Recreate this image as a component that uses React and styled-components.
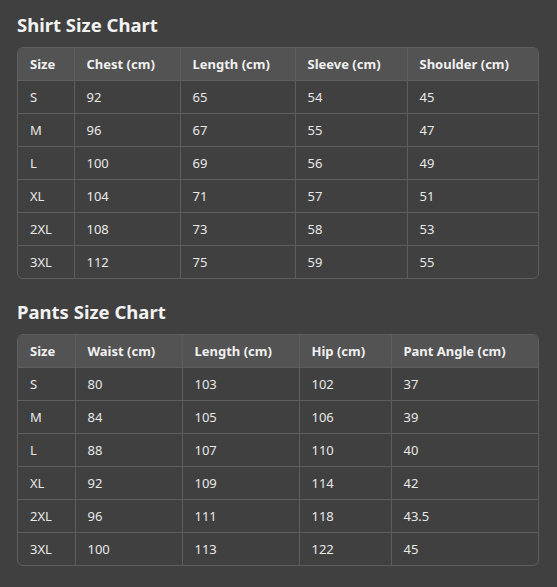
import React from 'react';
import styled, { createGlobalStyle } from 'styled-components';

const shirt = {
  cols: [
    { label: 'Size', width: 56 },
    { label: 'Chest (cm)', width: 106 },
    { label: 'Length (cm)', width: 115 },
    { label: 'Sleeve (cm)', width: 112 },
    { label: 'Shoulder (cm)', width: 131 },
  ],
  rows: [
    ['S', '92', '65', '54', '45'],
    ['M', '96', '67', '55', '47'],
    ['L', '100', '69', '56', '49'],
    ['XL', '104', '71', '57', '51'],
    ['2XL', '108', '73', '58', '53'],
    ['3XL', '112', '75', '59', '55'],
  ],
};

const pants = {
  cols: [
    { label: 'Size', width: 57 },
    { label: 'Waist (cm)', width: 107 },
    { label: 'Length (cm)', width: 117 },
    { label: 'Hip (cm)', width: 92 },
    { label: 'Pant Angle (cm)', width: 147 },
  ],
  rows: [
    ['S', '80', '103', '102', '37'],
    ['M', '84', '105', '106', '39'],
    ['L', '88', '107', '110', '40'],
    ['XL', '92', '109', '114', '42'],
    ['2XL', '96', '111', '118', '43.5'],
    ['3XL', '100', '113', '122', '45'],
  ],
};

const SizeChart = ({ title, data }) => (
  <Section>
    <Title>{title}</Title>
    <TableWrap>
      <Table>
        <colgroup>
          {data.cols.map((c) => (
            <col key={c.label} style={{ width: c.width }} />
          ))}
        </colgroup>
        <thead>
          <tr>
            {data.cols.map((c) => (
              <Th key={c.label}>{c.label}</Th>
            ))}
          </tr>
        </thead>
        <tbody>
          {data.rows.map((r) => (
            <tr key={r[0]}>
              {r.map((v, i) => (
                <Td key={i}>{v}</Td>
              ))}
            </tr>
          ))}
        </tbody>
      </Table>
    </TableWrap>
  </Section>
);

const App = () => (
  <>
    <GlobalStyle />
    <Page>
      <SizeChart title="Shirt Size Chart" data={shirt} />
      <SizeChart title="Pants Size Chart" data={pants} />
    </Page>
  </>
);

const GlobalStyle = createGlobalStyle`
  body {
    margin: 0;
    background: #404040;
    font-family: "Noto Sans", "Open Sans", sans-serif;
    color: #eeeeee;
  }
`;

const Page = styled.div`
  padding: 12px 18px 20px 17px;
  display: flex;
  flex-direction: column;
  gap: 20px;
`;

const Section = styled.section`
  display: flex;
  flex-direction: column;
  gap: 10px;
`;

const Title = styled.h2`
  margin: 0;
  font-size: 18.5px;
  line-height: 25px;
  font-weight: 700;
  color: #f2f2f2;
`;

const TableWrap = styled.div`
  border: 1px solid #5e5e5e;
  border-radius: 6px;
  overflow: hidden;
`;

const Table = styled.table`
  width: 100%;
  border-collapse: collapse;
  table-layout: fixed;
  font-size: 13px;
`;

const Th = styled.th`
  background: #535353;
  text-align: left;
  font-weight: 700;
  height: 32px;
  padding: 0 12px;
  border-left: 1px solid #5e5e5e;
  border-bottom: 1px solid #5e5e5e;
  color: #f0f0f0;
  &:first-child {
    border-left: none;
  }
`;

const Td = styled.td`
  height: 32px;
  padding: 0 12px;
  border-left: 1px solid #5e5e5e;
  border-top: 1px solid #5e5e5e;
  color: #e8e8e8;
  &:first-child {
    border-left: none;
  }
  tr:first-child > & {
    border-top: none;
  }
`;

export default App;
